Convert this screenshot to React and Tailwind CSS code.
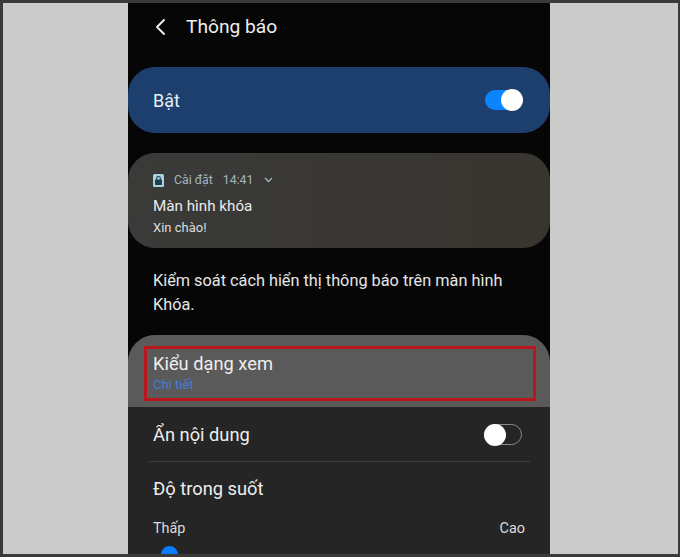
import React from "react";

function LockIcon() {
  return (
    <svg width="11" height="13" viewBox="0 0 11 13" className="shrink-0">
      <rect x="0" y="0" width="11" height="13" rx="1.5" fill="#a9d3dc" />
      <rect x="2" y="5.5" width="7" height="5.5" rx="0.8" fill="#1d3f55" />
      <path d="M3.6 5.8V4.4a1.9 1.9 0 0 1 3.8 0v1.4" fill="none" stroke="#1d3f55" strokeWidth="1.1" />
    </svg>
  );
}

export default function App() {
  return (
    <div className="w-[680px] h-[557px] bg-[#3a3a3a] pt-[3px] pb-[3px] pl-[3px] pr-[2px] overflow-hidden font-['Roboto',sans-serif]">
      <div className="h-full bg-[#cbcbcb] flex justify-start pl-[125px]">
        <div className="relative w-[422px] h-full bg-[#060606] overflow-hidden flex flex-col">
          <header className="h-[64px] shrink-0 flex items-center pl-[26px] pb-[16px] gap-[20px]">
            <svg width="12" height="18" viewBox="0 0 12 18" fill="none" stroke="#f0f0f0" strokeWidth="1.9" strokeLinecap="round" strokeLinejoin="round">
              <path d="M10 2 L3 9 L10 16" />
            </svg>
            <span className="text-[19.2px] text-[#eeeeee] leading-none">Thông báo</span>
          </header>

          <section className="h-[66px] shrink-0 rounded-[27px] bg-[#1c3f6e] flex items-center justify-between pl-[25px] pr-[28px]">
            <span className="text-[18px] text-[#e8eef5] leading-none pt-[1px]">Bật</span>
            <span className="relative w-[37px] h-[20px] rounded-full bg-[#0a84ff]">
              <span className="absolute right-[-1px] top-[-1px] w-[22px] h-[22px] rounded-full bg-white" />
            </span>
          </section>

          <section className="mt-[20px] h-[95px] shrink-0 rounded-[27px] bg-gradient-to-r from-[#3a3a39] to-[#38352f] pl-[25px] pt-[18px] flex flex-col">
            <div className="flex items-center h-[18px]">
              <LockIcon />
              <span className="ml-[10px] text-[12.3px] text-[#a3b8bf] leading-none">Cài đặt</span>
              <span className="ml-[10px] text-[12.3px] text-[#a3b8bf] leading-none">14:41</span>
              <svg className="ml-[11px]" width="9" height="6" viewBox="0 0 9 6" fill="none" stroke="#a3b8bf" strokeWidth="1.3">
                <path d="M1 1 L4.5 4.5 L8 1" />
              </svg>
            </div>
            <div className="mt-[8px] text-[15.2px] text-[#ececec] leading-[18px]">Màn hình khóa</div>
            <div className="mt-[5px] text-[13px] text-[#dddddd] leading-[16px]">Xin chào!</div>
          </section>

          <p className="mt-[21px] px-[25px] h-[66px] shrink-0 text-[16.3px] leading-[24px] text-[#e6e6e6]">
            Kiểm soát cách hiển thị thông báo trên màn hình Khóa.
          </p>

          <section className="flex-1 rounded-t-[27px] bg-[#252525] overflow-hidden">
            <div className="relative h-[72px] bg-[#5a5a5a] pl-[25px] pt-[18px]">
              <div className="text-[18.3px] leading-[22px] text-[#eeeeee]">Kiểu dạng xem</div>
              <div className="mt-[2px] text-[13px] leading-[15px] text-[#3f7fd6]">Chi tiết</div>
              <div className="absolute left-[16px] top-[11px] w-[392px] h-[55px] border-[3px] border-[#bb151d]" />
            </div>
            <div className="h-[55px] ml-[21px] mr-[20px] pl-[4px] pr-[8px] flex items-center justify-between border-b border-[#3d3d3d]">
              <span className="text-[18.3px] text-[#eeeeee] leading-none pt-[2px]">Ẩn nội dung</span>
              <span className="relative w-[38px] h-[21px] rounded-full border border-[#8a8a8a]">
                <span className="absolute left-[-1px] top-[-1px] w-[22px] h-[22px] rounded-full bg-white" />
              </span>
            </div>
            <div className="pl-[25px] pt-[15px] text-[18.3px] leading-[24px] text-[#eeeeee]">Độ trong suốt</div>
            <div className="mt-[18px] pl-[25px] pr-[25px] flex justify-between text-[14.4px] leading-[20px] text-[#dcdcdc]">
              <span>Thấp</span>
              <span>Cao</span>
            </div>
            <div className="mt-[7px] ml-[33px] w-[17px] h-[17px] rounded-full bg-[#0a7cff]" />
          </section>
        </div>
      </div>
    </div>
  );
}
